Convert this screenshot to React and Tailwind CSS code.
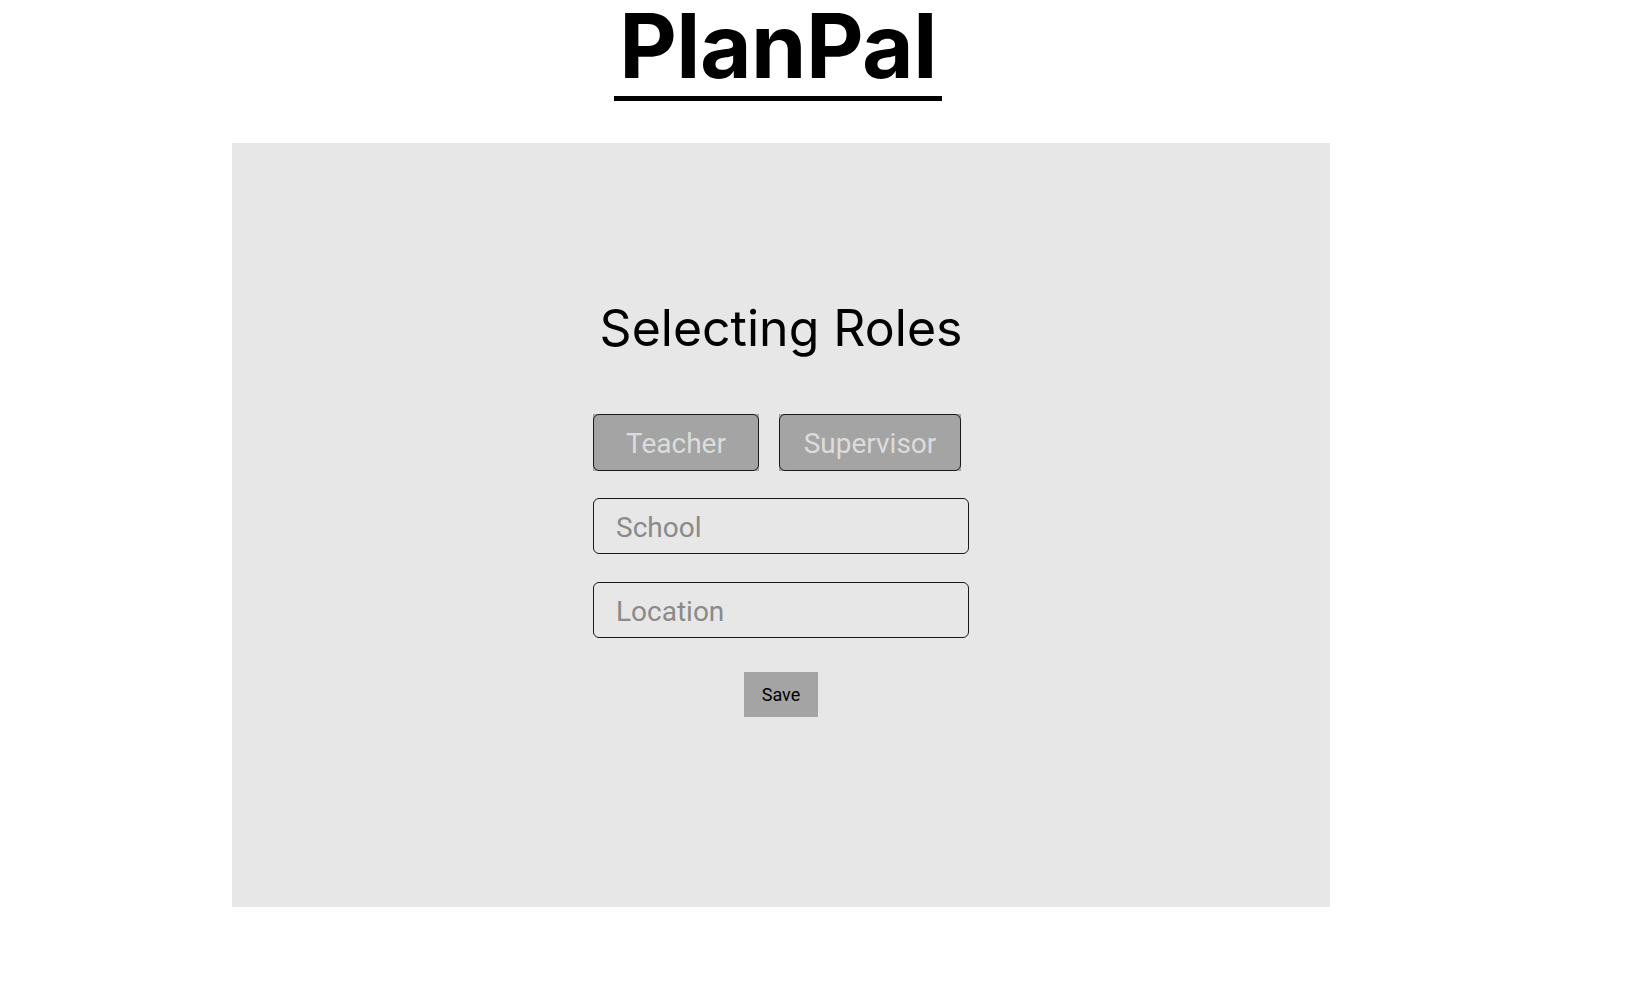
import React from 'react';

const RoleButton = ({ label, width }) => (
  <div className={`bg-[#a4a4a4] ${width}`}>
    <button className="w-full h-[57px] pt-[3px] rounded-[6px] border-[1.5px] border-[#1a1a1a] text-[28px] text-[#dcdcdc] font-['Roboto',sans-serif]">
      {label}
    </button>
  </div>
);

const Field = ({ placeholder }) => (
  <input
    placeholder={placeholder}
    className="w-[376px] h-[56px] pt-[3px] rounded-[6px] border-[1.5px] border-[#1a1a1a] bg-transparent px-[22px] text-[28px] font-['Roboto',sans-serif] placeholder:text-[#8a8a8a] outline-none"
  />
);

export default function App() {
  return (
    <div className="min-h-screen bg-white font-['Inter',sans-serif]">
      <div className="ml-[232px] pt-[2px] w-[1098px] flex justify-center">
        <h1 className="mr-[6px] px-[5px] pb-[6px] text-[89px] leading-[88px] tracking-[-0.5px] font-bold text-black border-b-[5px] border-black">
          PlanPal
        </h1>
      </div>

      <div className="ml-[232px] mt-[42px] w-[1098px] h-[764px] bg-[#e7e7e7] pt-[160px] flex flex-col items-center">
        <h2 className="text-[50px] leading-none text-black">Selecting Roles</h2>

        <div className="mt-[61px] w-[376px] flex gap-[20px]">
          <RoleButton label="Teacher" width="w-[166px]" />
          <RoleButton label="Supervisor" width="w-[182px]" />
        </div>

        <div className="mt-[27px] flex flex-col gap-[28px]">
          <Field placeholder="School" />
          <Field placeholder="Location" />
        </div>

        <button className="mt-[34px] w-[74px] h-[45px] bg-[#a4a4a4] text-[18px] text-black font-['Roboto',sans-serif]">
          Save
        </button>
      </div>
    </div>
  );
}
